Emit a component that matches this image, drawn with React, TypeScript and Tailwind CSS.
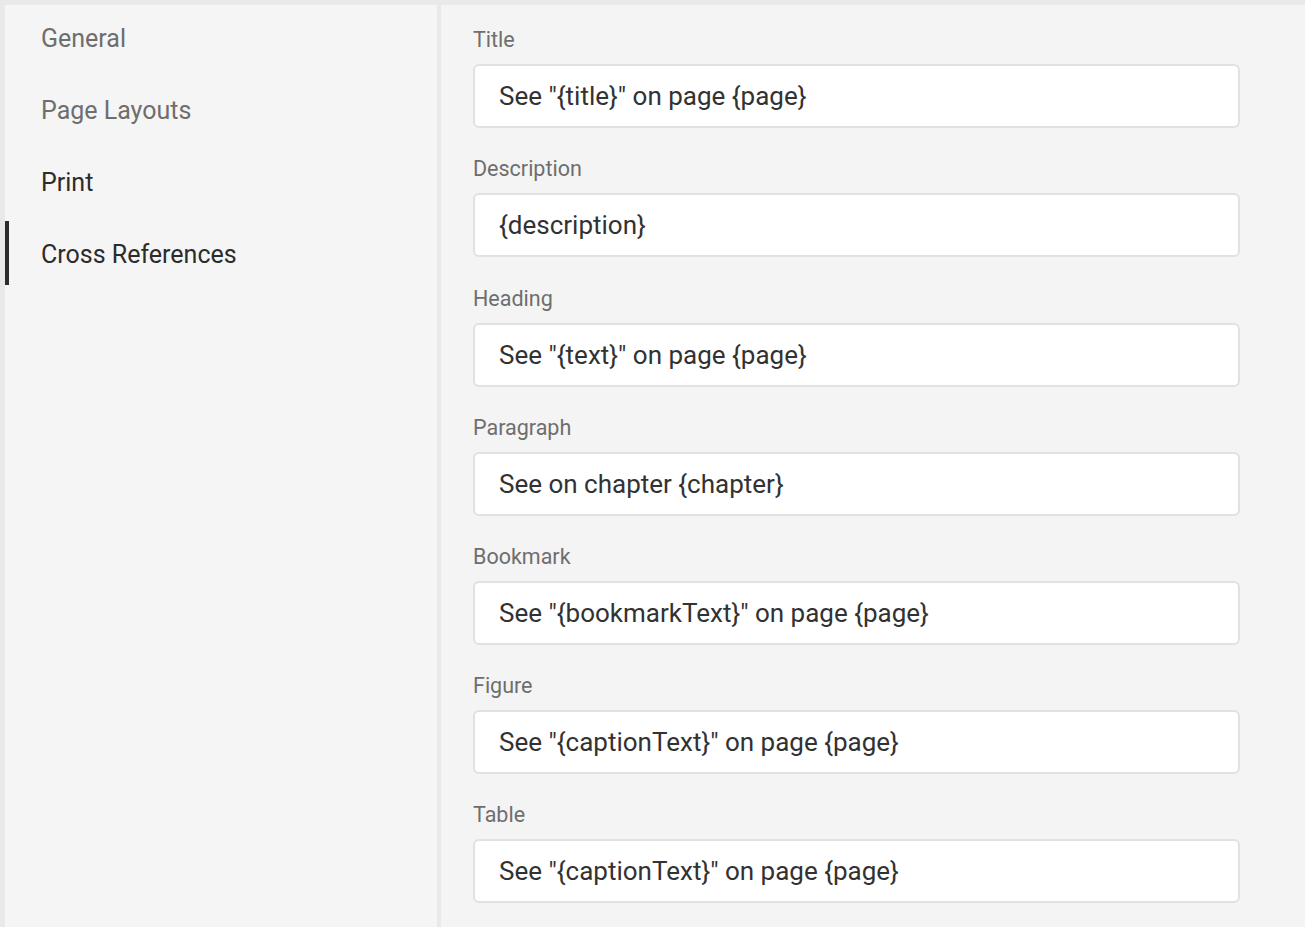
import React from "react";

const navItems = [
  { label: "General", active: false, dark: false },
  { label: "Page Layouts", active: false, dark: false },
  { label: "Print", active: false, dark: true },
  { label: "Cross References", active: true, dark: true },
];

const fields = [
  { label: "Title", value: 'See "{title}" on page {page}', gap: "pb-[26px]" },
  { label: "Description", value: "{description}", gap: "pb-[27px]" },
  { label: "Heading", value: 'See "{text}" on page {page}', gap: "pb-[26px]" },
  { label: "Paragraph", value: "See on chapter {chapter}", gap: "pb-[26px]" },
  { label: "Bookmark", value: 'See "{bookmarkText}" on page {page}', gap: "pb-[26px]" },
  { label: "Figure", value: 'See "{captionText}" on page {page}', gap: "pb-[26px]" },
  { label: "Table", value: 'See "{captionText}" on page {page}', gap: "pb-[26px]" },
];

export default function App() {
  return (
    <div
      className="flex h-[927px] w-full gap-[4px] overflow-hidden bg-[#e9e9e9] pl-[5px] pt-[5px]"
      style={{ fontFamily: "Roboto, 'Noto Sans', sans-serif" }}
    >
      <aside className="flex w-[432px] shrink-0 flex-col gap-[8px] bg-[#f5f5f5]">
        {navItems.map((item) => (
          <div key={item.label} className="relative flex h-[64px] items-center pl-[36px] pt-[2px]">
            {item.active && <div className="absolute left-0 top-0 h-full w-[4px] bg-[#2c2c2c]" />}
            <span
              className={`text-[25px] leading-none ${item.dark ? "text-[#2c2c2c]" : "text-[#6e6e6e]"}`}
            >
              {item.label}
            </span>
          </div>
        ))}
      </aside>
      <main className="flex flex-1 flex-col bg-[#f4f4f4] pl-[32px] pt-[20px]">
        {fields.map((f) => (
          <div key={f.label} className={`flex flex-col ${f.gap}`}>
            <label className="h-[30px] text-[21.5px] leading-[30px] text-[#6e6e6e]">{f.label}</label>
            <div className="mt-[9px] flex h-[64px] w-[767px] items-center rounded-[6px] border-2 border-[#e1e1e1] bg-white pl-[24px] text-[26px] text-[#323232]">
              {f.value}
            </div>
          </div>
        ))}
      </main>
    </div>
  );
}
